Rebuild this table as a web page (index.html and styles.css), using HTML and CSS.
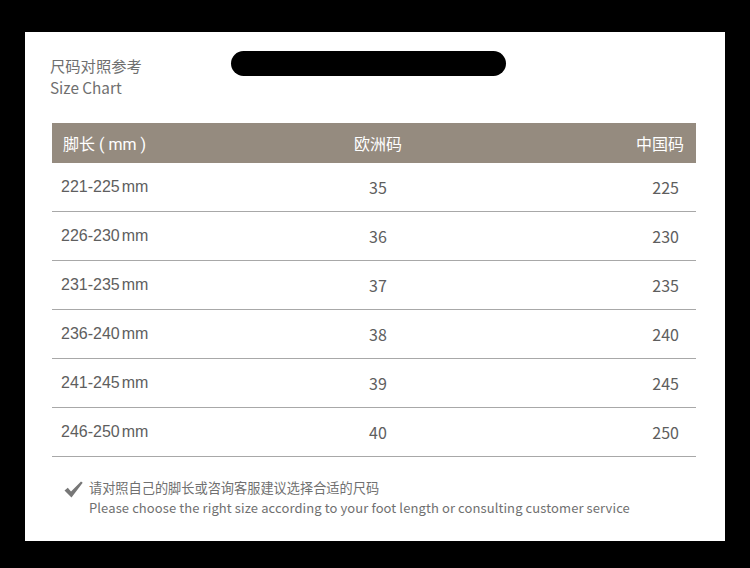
FILE: index.html
```html
<!DOCTYPE html>
<html lang="zh">
<head>
<meta charset="utf-8">
<link rel="stylesheet" href="styles.css">
</head>
<body>
<div class="panel">
  <div class="top">
    <div class="title">
      <div>尺码对照参考</div>
      <div>Size Chart</div>
    </div>
    <div class="pill"></div>
  </div>
  <div class="table">
    <div class="row head">
      <div class="c1">脚长 ( mm )</div>
      <div class="c2">欧洲码</div>
      <div class="c3">中国码</div>
    </div>
    <div class="row"><div class="c1">221-225<span class="mm">mm</span></div><div class="c2">35</div><div class="c3">225</div></div>
    <div class="row"><div class="c1">226-230<span class="mm">mm</span></div><div class="c2">36</div><div class="c3">230</div></div>
    <div class="row"><div class="c1">231-235<span class="mm">mm</span></div><div class="c2">37</div><div class="c3">235</div></div>
    <div class="row"><div class="c1">236-240<span class="mm">mm</span></div><div class="c2">38</div><div class="c3">240</div></div>
    <div class="row"><div class="c1">241-245<span class="mm">mm</span></div><div class="c2">39</div><div class="c3">245</div></div>
    <div class="row"><div class="c1">246-250<span class="mm">mm</span></div><div class="c2">40</div><div class="c3">250</div></div>
  </div>
  <div class="note">
    <svg class="check" width="19" height="17" viewBox="0 0 19 17"><path d="M0.5 9.5 L3.8 6.8 L7 10.5 L17 0.5 L18.7 1.8 L7.5 16.5 Z" fill="#777"/></svg>
    <div class="note-text">
      <div class="cn">请对照自己的脚长或咨询客服建议选择合适的尺码</div>
      <div class="en">Please choose the right size according to your foot length or consulting customer service</div>
    </div>
  </div>
</div>
</body>
</html>
```
FILE: styles.css
```css
html, body {
  margin: 0;
  padding: 0;
  background: #000;
}
body {
  width: 750px;
  height: 568px;
  overflow: hidden;
  padding-top: 32px;
  box-sizing: border-box;
  font-family: "Noto Sans CJK SC", "Noto Sans", sans-serif;
}
.panel {
  margin-left: 25px;
  width: 700px;
  height: 509px;
  background: #fff;
  box-sizing: border-box;
  padding-top: 19px;
}
.top {
  display: flex;
  align-items: flex-start;
  padding-left: 25px;
}
.title {
  margin-top: 3px;
  font-size: 15.3px;
  line-height: 22px;
  color: #6f6f6f;
  width: 181px;
}
.pill {
  width: 275px;
  height: 25px;
  border-radius: 13px;
  background: #000;
}
.table {
  margin: 25px 0 0 27px;
  width: 644px;
}
.row {
  display: grid;
  grid-template-columns: 1fr 1fr 1fr;
  align-items: center;
  height: 48px;
  border-bottom: 1px solid #a8a8a8;
  color: #5e5e5e;
  font-size: 16px;
}
.row.head {
  height: 40px;
  border-bottom: none;
  background: #958b7f;
  color: #fff;
  font-size: 16px;
}
.c1 {
  padding-left: 9px;
  font-family: "Liberation Sans", Arial, sans-serif;
}
.head .c1 {
  padding-left: 11px;
  font-family: Roboto, "Noto Sans CJK SC", sans-serif;
}
.mm {
  margin-left: 2px;
}
.c2 {
  text-align: center;
  padding-left: 8px;
}
.c3 {
  text-align: right;
  padding-right: 17px;
}
.head .c3 {
  padding-right: 12px;
}
.note {
  display: flex;
  align-items: flex-start;
  margin: 21px 0 0 39px;
}
.check {
  margin-top: 3px;
  margin-right: 6px;
}
.note-text {
  line-height: 20px;
  color: #707070;
}
.cn {
  font-size: 13.2px;
}
.en {
  font-size: 13px;
  letter-spacing: 0.1px;
}
```
